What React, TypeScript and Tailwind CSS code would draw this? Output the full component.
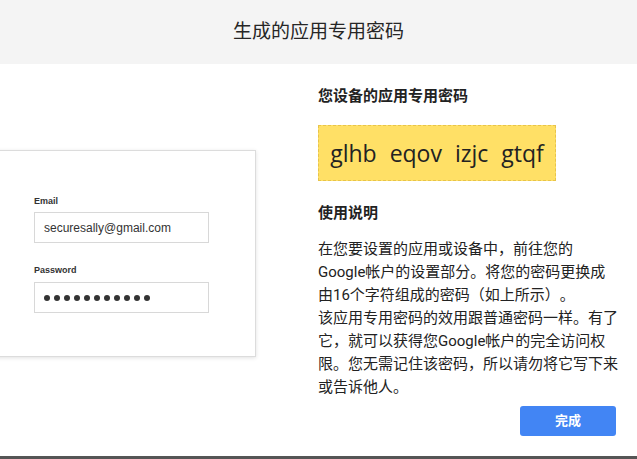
import React from "react";

const cjk = { fontFamily: '"Roboto", "Noto Sans CJK SC", sans-serif' };

export default function App() {
  const lines = [
    "在您要设置的应用或设备中，前往您的",
    "Google帐户的设置部分。将您的密码更换成",
    "由16个字符组成的密码（如上所示）。",
    "该应用专用密码的效用跟普通密码一样。有了",
    "它，就可以获得您Google帐户的完全访问权",
    "限。您无需记住该密码，所以请勿将它写下来",
    "或告诉他人。",
  ];
  return (
    <div className="w-[637px] h-[459px] bg-white flex flex-col overflow-hidden [text-spacing-trim:space-all]" style={cjk}>
      <div className="h-16 bg-[#f4f4f4] flex items-center justify-center shrink-0">
        <span className="text-[19px] text-[#262626]">生成的应用专用密码</span>
      </div>
      <div className="flex flex-1 min-h-0">
        <div className="w-[318px] shrink-0">
          <div className="-ml-[20px] w-[276px] mt-[86px] h-[207px] bg-white border border-[#dcdcdc] shadow-[0_1px_4px_rgba(0,0,0,0.12)] pl-[53px] pt-[43px]" style={{ fontFamily: '"Liberation Sans", Arial, sans-serif' }}>
            <div className="text-[9px] leading-[14px] font-bold text-[#333]">Email</div>
            <div className="mt-[4px] w-[175px] h-[31px] border border-[#d8d8d8] flex items-center pl-[9px] text-[12px] text-[#333]">
              securesally@gmail.com
            </div>
            <div className="mt-[20px] text-[9px] leading-[14px] font-bold text-[#333]">Password</div>
            <div className="mt-[5px] w-[175px] h-[31px] border border-[#d8d8d8] flex items-center pl-[9px] gap-[4px]">
              {Array.from({ length: 11 }).map((_, i) => (
                <span key={i} className="w-[6px] h-[6px] rounded-full bg-[#333]" />
              ))}
            </div>
          </div>
        </div>
        <div className="flex-1 flex flex-col pt-[22px] pr-[21px] text-[#222]">
          <div className="text-[15px] leading-[20px] font-bold">您设备的应用专用密码</div>
          <div
            className="mt-[19px] w-[238px] h-[56px] bg-[#ffe066] border border-dashed border-[#e8c44a] flex items-center justify-center text-[23px] text-[#222]"
            style={{ fontFamily: '"Open Sans", sans-serif', wordSpacing: "7px" }}
          >
            glhb eqov izjc gtqf
          </div>
          <div className="mt-[22px] text-[15px] leading-[20px] font-bold">使用说明</div>
          <div className="mt-[15px] text-[15px] leading-[23px] text-[#222]">
            {lines.map((l, i) => (
              <div key={i} className="whitespace-nowrap">{l}</div>
            ))}
          </div>
          <div className="flex justify-end mt-[7px] pr-[2px]">
            <button className="w-[96px] h-[30px] rounded-[3px] bg-[#4285f4] text-white text-[13px] font-bold">完成</button>
          </div>
        </div>
      </div>
      <div className="h-[3px] bg-[#555] shrink-0" />
    </div>
  );
}
